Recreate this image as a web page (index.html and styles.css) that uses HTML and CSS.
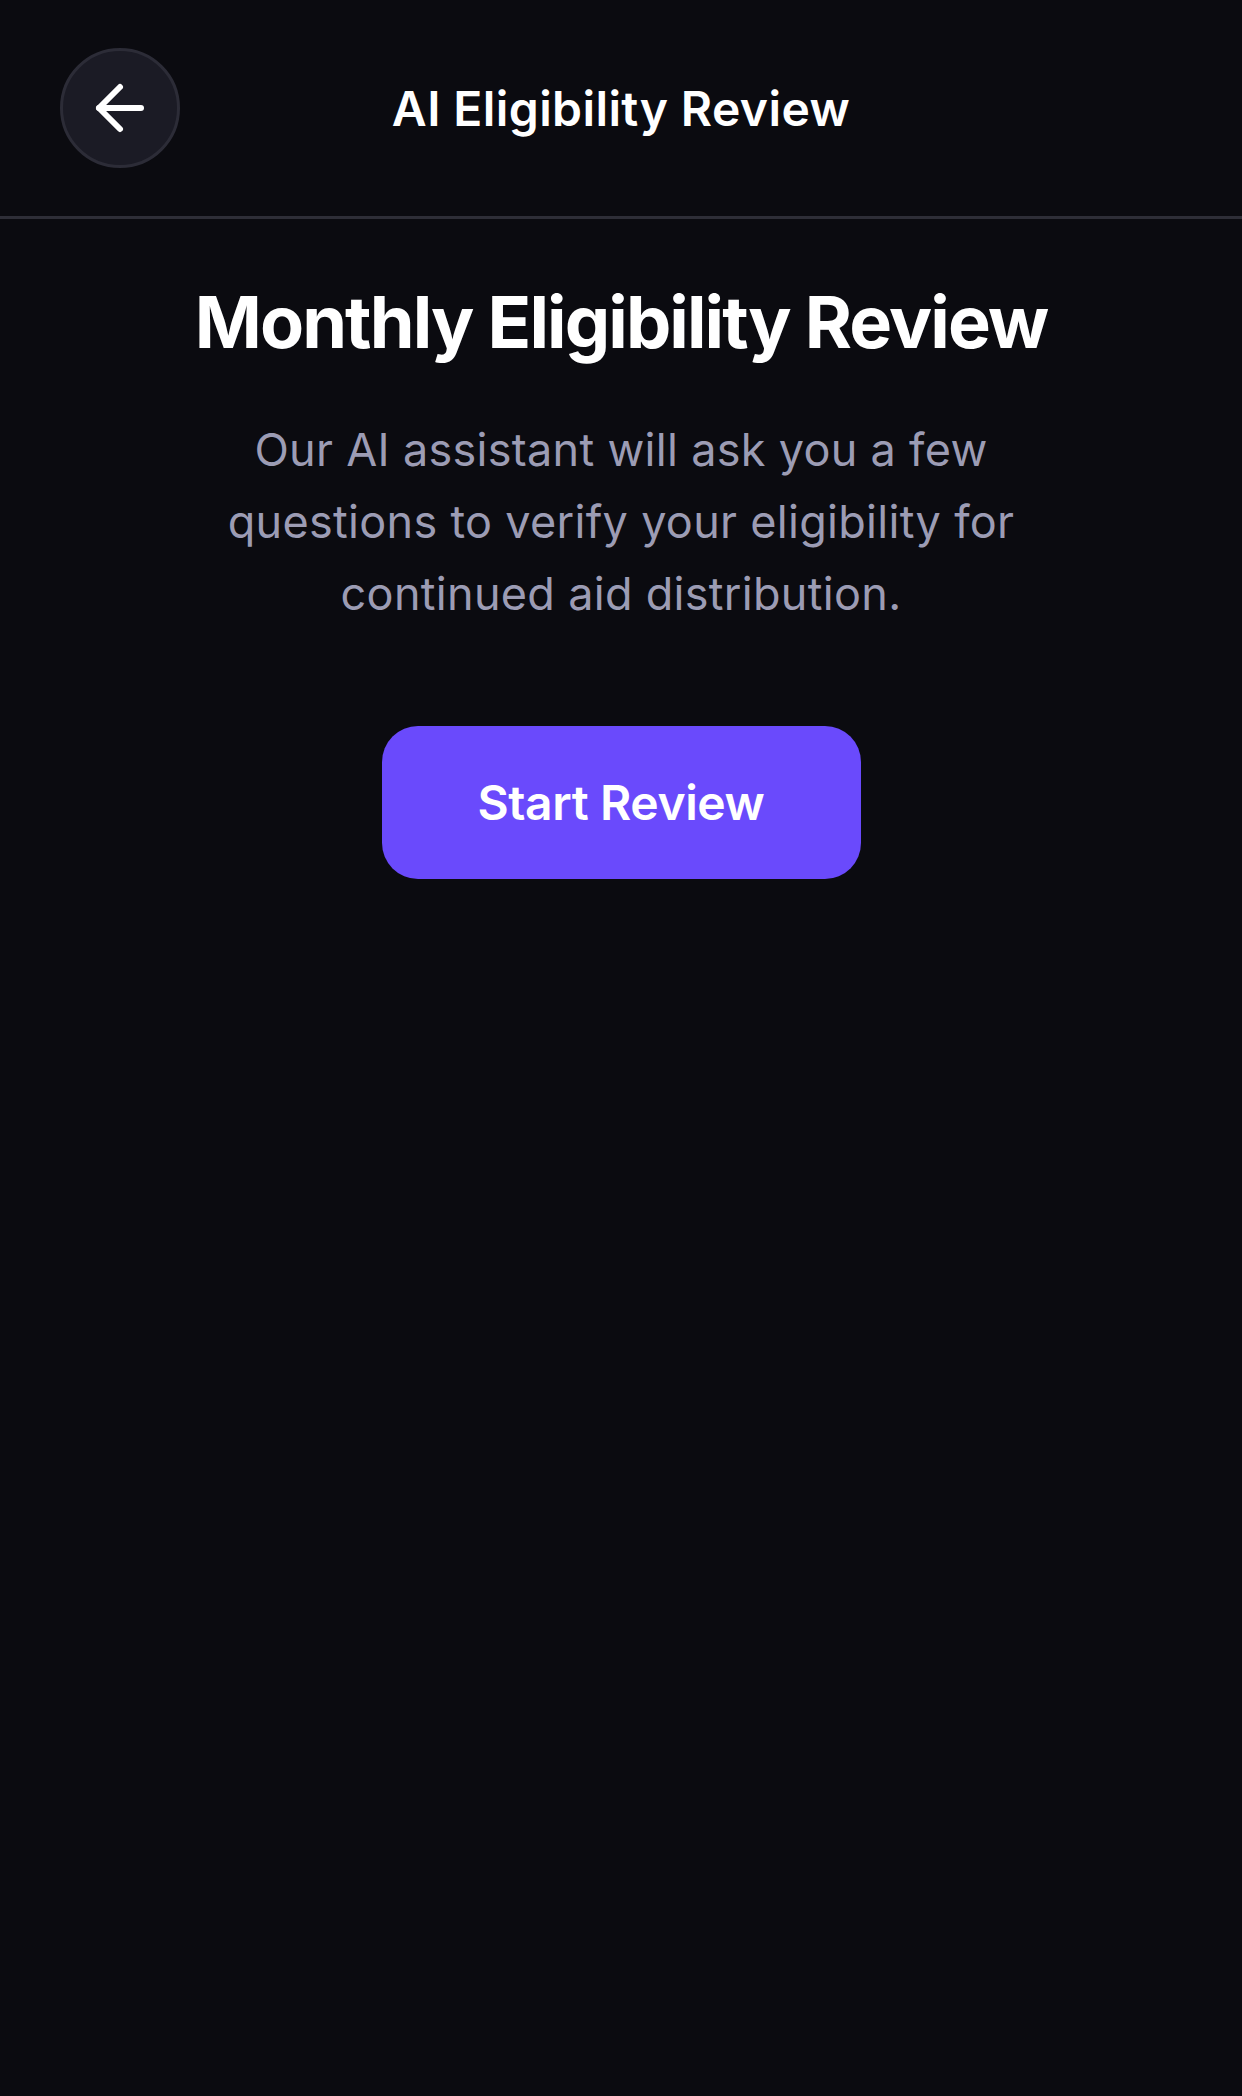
FILE: index.html
```html
<!DOCTYPE html>
<html lang="en">
<head>
<meta charset="utf-8">
<title>AI Eligibility Review</title>
<link rel="stylesheet" href="styles.css">
</head>
<body>
<div class="screen">
  <header class="topbar">
    <div class="topbar-side">
      <button class="back-btn" aria-label="Back">
        <svg class="back-icon" viewBox="0 0 24 24" fill="none" stroke="currentColor" stroke-width="2" stroke-linecap="round" stroke-linejoin="round">
          <path d="M12 19l-7-7 7-7"/>
          <path d="M19 12H5"/>
        </svg>
      </button>
    </div>
    <h1 class="topbar-title">AI Eligibility Review</h1>
    <div class="topbar-side"></div>
  </header>
  <main class="content">
    <h2 class="headline">Monthly Eligibility Review</h2>
    <p class="intro">Our AI assistant will ask you a few questions to verify your eligibility for continued aid distribution.</p>
    <button class="start-btn">Start Review</button>
  </main>
</div>
</body>
</html>
```
FILE: styles.css
```css
html, body {
  margin: 0;
  padding: 0;
  background: #0b0b10;
}
body {
  font-family: Inter, "Noto Sans", "Liberation Sans", sans-serif;
  color: #ffffff;
  min-height: 2096px;
}
.screen {
  display: flex;
  flex-direction: column;
  min-height: 2096px;
}
.topbar {
  display: grid;
  grid-template-columns: 1fr auto 1fr;
  align-items: center;
  padding: 48px 60px;
  border-bottom: 3px solid #2e2e37;
}
.topbar-side {
  display: flex;
  align-items: center;
}
.back-btn {
  width: 120px;
  height: 120px;
  border-radius: 50%;
  border: 3px solid #2c2c37;
  background: #1b1b25;
  color: #ffffff;
  display: flex;
  align-items: center;
  justify-content: center;
  padding: 0;
  box-sizing: border-box;
}
.back-icon {
  width: 72px;
  height: 72px;
}
.topbar-title {
  margin: 0;
  font-size: 48px;
  font-weight: 600;
  letter-spacing: 0.4px;
  color: #ffffff;
}
.content {
  display: flex;
  flex-direction: column;
  align-items: center;
  padding: 60px 60px 0;
}
.headline {
  margin: 0;
  font-size: 72px;
  line-height: 86px;
  font-weight: 700;
  letter-spacing: -1.9px;
  text-align: center;
  color: #ffffff;
}
.intro {
  margin: 49px 0 0;
  max-width: 840px;
  font-size: 45px;
  line-height: 72px;
  font-weight: 400;
  letter-spacing: 0.3px;
  text-align: center;
  color: #9c9cb4;
}
.start-btn {
  margin-top: 96px;
  width: 479px;
  height: 153px;
  border: none;
  border-radius: 36px;
  background: #6a4afc;
  color: #ffffff;
  font-family: inherit;
  font-size: 48px;
  font-weight: 600;
  letter-spacing: -0.4px;
}
```
